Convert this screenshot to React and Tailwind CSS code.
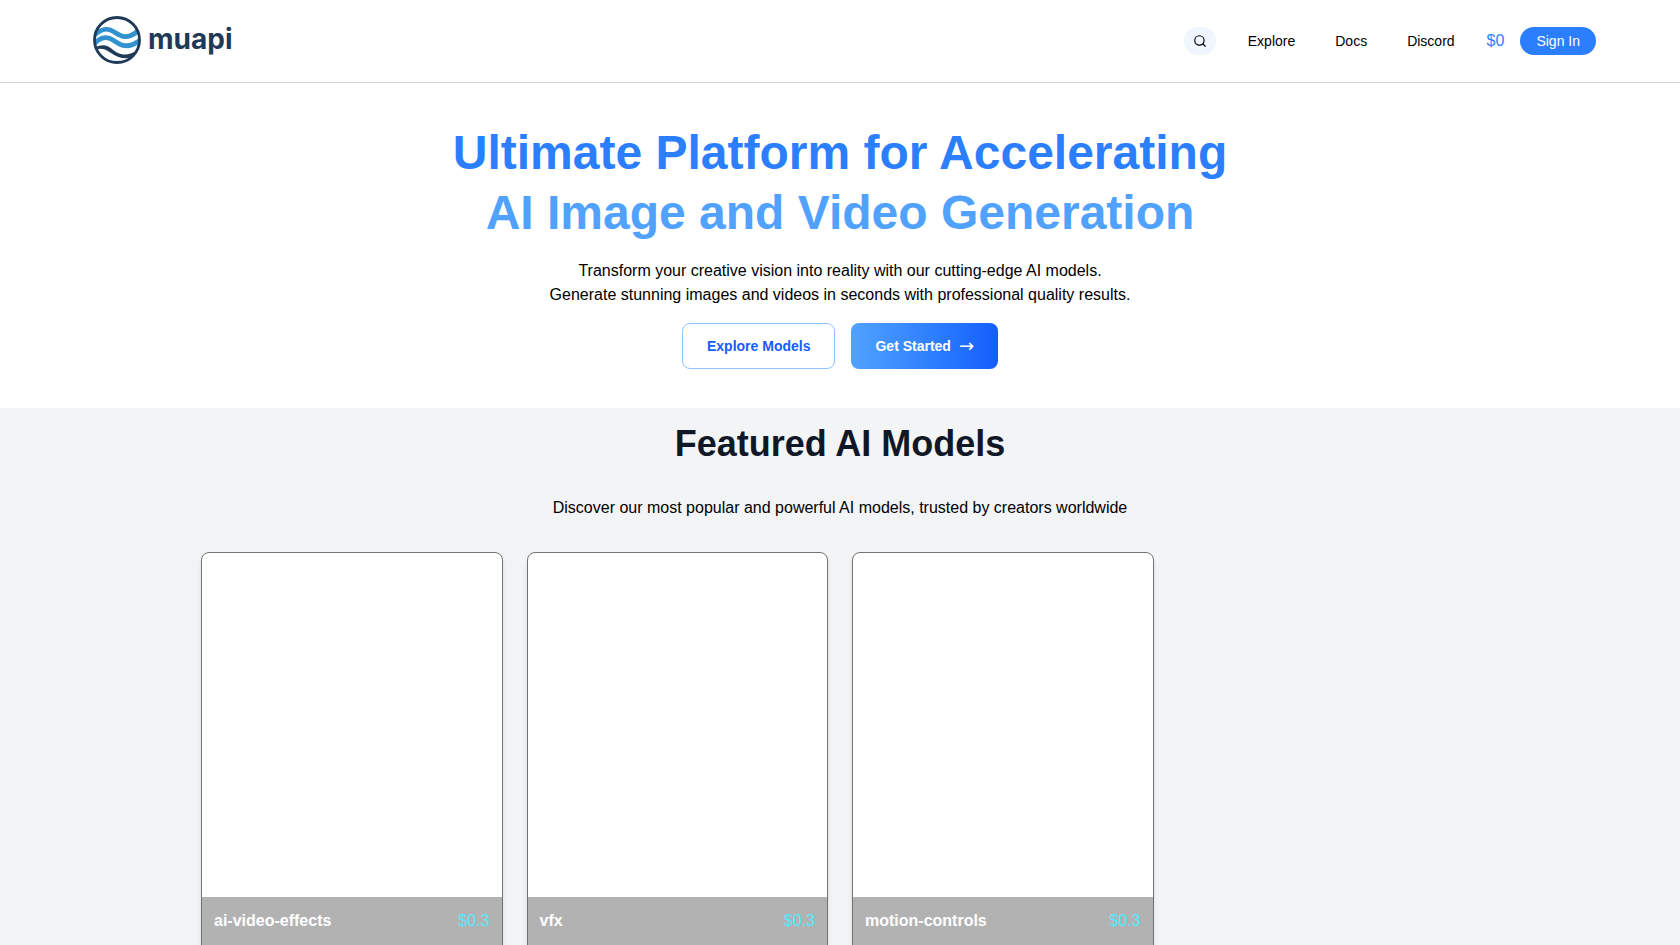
import React from 'react';
import { Search } from 'lucide-react';

const navLinks = ['Explore', 'Docs', 'Discord'];

const models = [
  { name: 'ai-video-effects', price: '$0.3' },
  { name: 'vfx', price: '$0.3' },
  { name: 'motion-controls', price: '$0.3' },
];

const Logo = () => (
  <a href="#" className="flex items-center gap-[7px] px-[9px]">
    <svg viewBox="0 0 48 48" className="w-12 h-12" fill="none" aria-hidden="true">
      <defs>
        <clipPath id="logo-disc">
          <circle cx="24" cy="24" r="22" />
        </clipPath>
      </defs>
      <g clipPath="url(#logo-disc)">
        <path d="M0 20.500C7 13.500 13 11 20 15.200C27 19.500 33 25.500 46 14" stroke="#3192cf" strokeWidth="4.800" />
        <path d="M0 29C7 21.500 13 19.500 20 24C27 28.500 34 34.500 48 23.500" stroke="#3192cf" strokeWidth="4.800" />
        <path d="M2 31.500C8 28.500 13 28 18 32.200C25 38 33 42.500 46 33L42 40C34 44 26 42.500 18 37C12 32.800 8 31.500 2 34Z" fill="#1f3a56" />
      </g>
      <circle cx="24" cy="24" r="22.500" stroke="#1f3a56" strokeWidth="2.800" />
    </svg>
    <span className="pb-0.5 font-['Inter',sans-serif] text-[28px] leading-8 font-bold text-[#1f3a56]">muapi</span>
  </a>
);

const Header = () => (
  <header className="flex items-center justify-between border-b border-gray-300 px-[5%] pt-4 pb-[18px]">
    <Logo />
    <nav className="flex items-center gap-4 pt-0.5 text-sm">
      <button aria-label="Search" className="flex items-center justify-center w-8 h-7 mr-4 rounded-full bg-blue-50">
        <Search className="w-3.5 h-3.5" />
      </button>
      <div className="flex gap-10 mr-4">
        {navLinks.map((link) => (
          <a key={link} href="#">{link}</a>
        ))}
      </div>
      <span className="text-base text-blue-500">$0</span>
      <button className="rounded-full bg-[#2b7fff] px-4 py-1 text-white">Sign In</button>
    </nav>
  </header>
);

const Hero = () => (
  <section className="flex flex-col items-center gap-4 bg-white pt-10 pb-[39px] text-center">
    <h1 className="text-5xl leading-[60px] font-bold text-[#2b7fff]">
      Ultimate Platform for Accelerating
      <span className="block text-[#51a2ff]">AI Image and Video Generation</span>
    </h1>
    <p>
      Transform your creative vision into reality with our cutting-edge AI models.
      <br />
      Generate stunning images and videos in seconds with professional quality results.
    </p>
    <div className="flex gap-4 text-sm font-bold">
      <a href="#" className="rounded-lg border border-[#8ec5ff] px-6 py-3 text-[#155dfc]">Explore Models</a>
      <a href="#" className="flex items-center gap-2 rounded-lg bg-linear-to-r from-[#51a2ff] to-[#155dfc] px-6 text-white">
        Get Started
        <span className="font-['DejaVu_Sans',sans-serif] text-lg leading-5 font-normal">→</span>
      </a>
    </div>
  </section>
);

const ModelCard = ({ name, price }) => (
  <a href="#" className="block overflow-hidden rounded-lg border border-neutral-500 bg-white shadow-md">
    <div className="h-[344px]" />
    <div className="flex justify-between bg-[#b2b2b2] px-3 pt-3 pb-8">
      <h3 className="font-bold text-white">{name}</h3>
      <span className="text-[#53eafd]">{price}</span>
    </div>
  </a>
);

const Featured = () => (
  <section className="bg-gray-100 py-4">
    <h2 className="text-4xl font-bold text-center text-gray-900">Featured AI Models</h2>
    <p className="mt-8 text-center">
      Discover our most popular and powerful AI models, trusted by creators worldwide
    </p>
    <div className="grid grid-cols-4 gap-6 max-w-7xl mx-auto mt-8 px-px">
      {models.map((model) => (
        <ModelCard key={model.name} {...model} />
      ))}
    </div>
  </section>
);

const App = () => {
  return (
    <div className="min-h-screen bg-gray-100 font-['Liberation_Sans',Arial,sans-serif] text-black">
      <div className="bg-white">
        <Header />
      </div>
      <Hero />
      <Featured />
    </div>
  );
};

export default App;
